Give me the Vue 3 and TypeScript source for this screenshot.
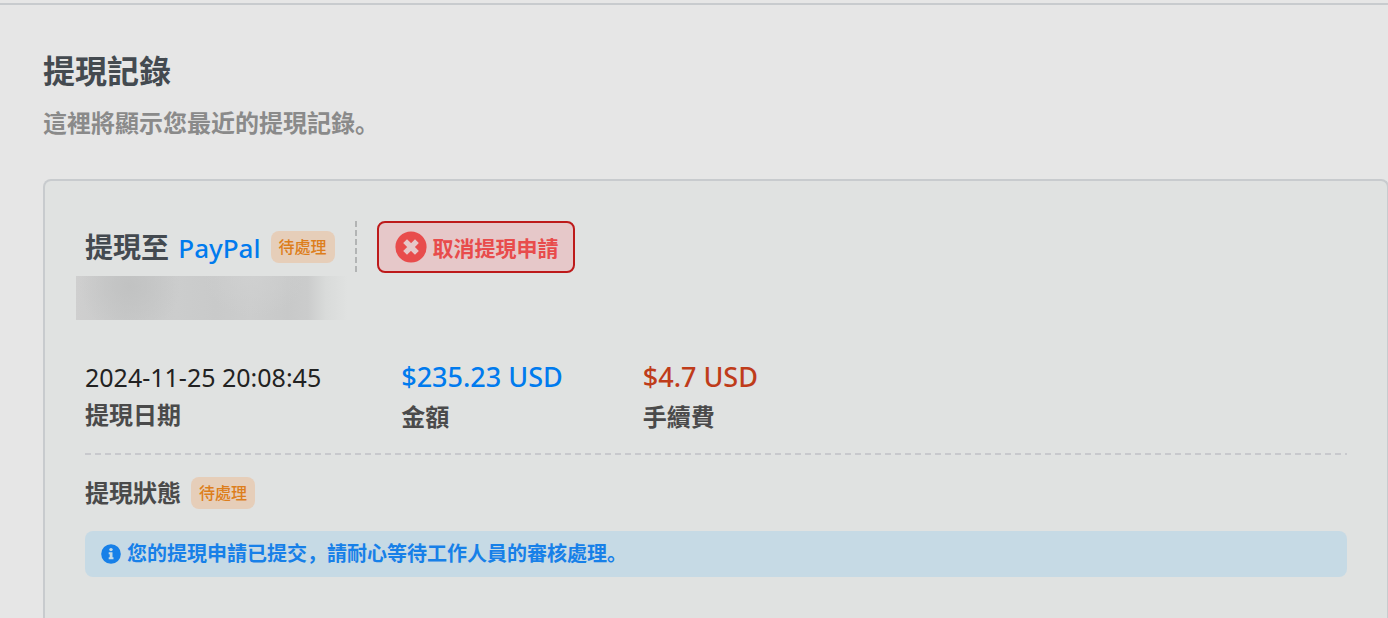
<script setup lang="ts">
interface Figure {
  value: string
  label: string
  tone: 'date' | 'amount' | 'fee'
}

const figures: Figure[] = [
  { value: '2024-11-25 20:08:45', label: '提現日期', tone: 'date' },
  { value: '$235.23 USD', label: '金額', tone: 'amount' },
  { value: '$4.7 USD', label: '手續費', tone: 'fee' },
]
</script>

<template>
  <main class="page">
    <header class="intro">
      <h1>提現記錄</h1>
      <p>這裡將顯示您最近的提現記錄。</p>
    </header>

    <article class="card">
      <div class="head">
        <h2>提現至 <span class="method">PayPal</span></h2>
        <span class="badge">待處理</span>
        <span class="divider"></span>
        <button type="button" class="cancel">
          <svg viewBox="0 0 32 32" aria-hidden="true">
            <circle cx="16" cy="16" r="15.6" fill="#e84c4c" />
            <path d="M12 12 L20 20 M20 12 L12 20" stroke="#e6c8c9" stroke-width="5.4" stroke-linecap="square" />
          </svg>
          取消提現申請
        </button>
      </div>

      <div class="account"></div>

      <dl class="figures">
        <div v-for="figure in figures" :key="figure.label" class="figure" :class="figure.tone">
          <dd>{{ figure.value }}</dd>
          <dt>{{ figure.label }}</dt>
        </div>
      </dl>

      <div class="status">
        <h3>提現狀態</h3>
        <span class="badge">待處理</span>
      </div>

      <p class="notice">
        <svg viewBox="0 0 20 20" aria-hidden="true">
          <circle cx="10" cy="10" r="9.8" fill="#1780e8" />
          <circle cx="10" cy="5.6" r="1.7" fill="#c6dae5" />
          <path d="M7.7 8.2 H11.5 V13.2 H12.5 V15.2 H7.7 V13.2 H8.7 V10.2 H7.7 Z" fill="#c6dae5" />
        </svg>
        <span>您的提現申請已提交，請耐心等待工作人員的審核處理。</span>
      </p>
    </article>
  </main>
</template>

<style>
body {
  margin: 0;
  background: #e6e6e6;
}
</style>

<style scoped>
.page {
  box-sizing: border-box;
  display: flex;
  flex-direction: column;
  min-height: 100vh;
  margin-top: 3px;
  margin-bottom: -3px;
  padding: 44px 0 0 43px;
  border-top: 2px solid #c8cbce;
  overflow: hidden;
  font-family: "Noto Sans", "Noto Sans CJK SC", sans-serif;
  color: #4a4a4a;
}

h1,
h2,
h3,
p,
dl,
dd,
dt {
  margin: 0;
}

h1 {
  font-size: 32px;
  line-height: 44px;
  font-weight: 700;
  color: #444a50;
}

.intro p {
  margin-top: 12px;
  font-size: 24px;
  line-height: 36px;
  font-weight: 700;
  color: #8a8a8a;
}

.card {
  flex: 1;
  margin-top: 38px;
  margin-right: -1px;
  padding: 40px;
  border: 2px solid #c8cbce;
  border-bottom: 0;
  border-radius: 8px 8px 0 0;
  background: #e0e2e1;
}

.head {
  display: flex;
  align-items: center;
  height: 52px;
}

h2 {
  font-size: 28px;
  line-height: 40px;
  font-weight: 700;
  color: #444a50;
}

.method {
  margin-left: 2px;
  font-size: 26px;
  font-weight: 500;
  color: #007bee;
}

.badge {
  margin-left: 10px;
  padding: 0 8px;
  border-radius: 8px;
  font-size: 16px;
  line-height: 32px;
  font-weight: 500;
  color: #dd7e1c;
  background: #e6ceb9;
}

.divider {
  align-self: stretch;
  margin: 0 20px;
  width: 2px;
  background: repeating-linear-gradient(#b2b4b4 0 6px, transparent 6px 9px);
}

.cancel {
  display: flex;
  align-items: center;
  gap: 6px;
  height: 52px;
  padding: 0 14px 0 16px;
  border: 2px solid #bd1a1a;
  border-radius: 8px;
  font: inherit;
  font-size: 21px;
  font-weight: 700;
  color: #e84c4c;
  background: #e6c8c9;
  cursor: pointer;
}

.cancel svg {
  width: 32px;
  height: 32px;
}

.account {
  width: 272px;
  height: 44px;
  margin: 3px 0 0 -9px;
  background:
    radial-gradient(ellipse 50px 50px at 54px 10px, #c1c2c2, transparent),
    radial-gradient(ellipse 50px 40px at 178px 0, #cfd0d0, transparent),
    linear-gradient(90deg, #cfcfcf 0, #c8c9c9 50px, #cccdcd 100px, #c9caca 140px, #cccdcd 175px, #c8c9c9 212px, #cbcccc 232px, #d9dbda 250px, #e0e2e1 272px);
}

.figures {
  display: flex;
  gap: 80px;
  padding-bottom: 18px;
  margin-top: 37px;
  background: repeating-linear-gradient(90deg, #c8c9cd 0 6px, transparent 6px 10px) bottom / 100% 2px no-repeat;
}

.figure {
  display: flex;
  flex-direction: column;
}

dd {
  font-size: 27px;
  line-height: 40px;
  font-weight: 500;
}

dt {
  font-size: 24px;
  line-height: 40px;
  font-weight: 700;
}

.date dd {
  font-size: 25px;
  font-weight: 400;
  color: #222;
}

.date dt {
  line-height: 36px;
}

.amount dd {
  color: #007bee;
}

.fee dd {
  color: #bf3c1a;
}

.status {
  display: flex;
  align-items: center;
  margin-top: 22px;
}

h3 {
  font-size: 24px;
  line-height: 32px;
  font-weight: 700;
}

.notice {
  display: flex;
  align-items: center;
  gap: 6px;
  margin-top: 22px;
  padding: 8px 16px;
  border-radius: 8px;
  font-size: 20px;
  line-height: 30px;
  font-weight: 700;
  color: #1780e8;
  background: #c6dae5;
}

.notice svg {
  flex: none;
  width: 20px;
  height: 20px;
}
</style>
